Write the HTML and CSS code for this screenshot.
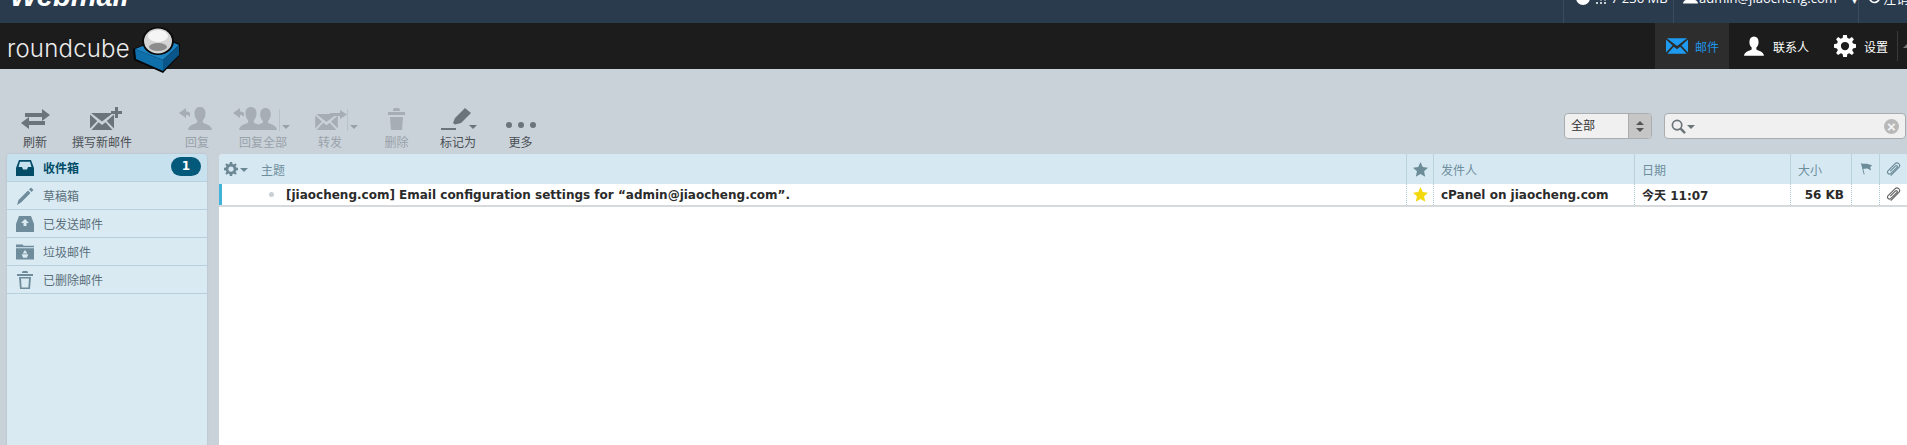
FILE: index.html
```html
<!DOCTYPE html>
<html lang="zh">
<head>
<meta charset="utf-8">
<title>Roundcube Webmail</title>
<link rel="stylesheet" href="styles.css">
</head>
<body>
<svg class="defs" width="0" height="0" aria-hidden="true">
  <symbol id="person" viewBox="0 0 24 24"><path d="M12 0c3.600 0 5.500 2.500 5.500 6.500 0 2.800-1 5.200-2.700 6.800v2.200c1 1.200 8.700 2 9.200 7.500H0c.5-5.500 8.200-6.300 9.200-7.500v-2.200C7.500 11.700 6.500 9.300 6.500 6.500 6.500 2.500 8.400 0 12 0z"/></symbol>
  <symbol id="env" viewBox="0 0 24 17"><path d="M1 0h22L12 8.500zM0 1.500v14L7.200 8zM24 1.500v14L16.800 8zM1.500 17h21l-7-7.700L12 12 8.500 9.300z"/></symbol>
  <symbol id="gear" viewBox="0 0 24 24"><path fill-rule="evenodd" d="M10 0h4l.6 3.300 2.100.9L19.500 2.300l2.200 2.200-1.900 2.800.9 2.100L24 10v4l-3.300.6-.9 2.100 1.900 2.800-2.200 2.200-2.800-1.900-2.100.9L14 24h-4l-.6-3.300-2.100-.9-2.800 1.900-2.200-2.200 1.900-2.800-.9-2.100L0 14v-4l3.300-.6.9-2.100-1.900-2.800 2.200-2.200 2.800 1.900 2.100-.9zM12 7.500a4.500 4.500 0 1 0 0 9 4.500 4.500 0 0 0 0-9z"/></symbol>
  <symbol id="clip" viewBox="0 0 16 16"><path d="M5 14.500L13.500 6c1.500-1.500 1.500-3 0-4.300S10.800.7 9.500 2L2.300 9.200c-1 1-1 2.300 0 3.100s2 .8 3-.2L11.500 6c.7-.7.7-1.300.2-1.800s-1.200-.4-1.800.2L4.500 9.800" fill="none" stroke="currentColor" stroke-width="1.300"/></symbol>
</svg>

<header class="topbar">
  <div class="brand">Webmail</div>
  <div class="topinfo">
    <div class="topcell quota">
      <svg class="t-pie" viewBox="0 0 16 16"><path fill="#fff" d="M7 2a7 7 0 1 0 7 7H7z"/><path fill="#fff" d="M9 0v7h7a7 7 0 0 0-7-7z"/></svg>
      <svg class="t-dots" viewBox="0 0 10 6" fill="#fff"><circle cx="1" cy="5" r="1"/><circle cx="5" cy="5" r="1"/><circle cx="9" cy="5" r="1"/><circle cx="5" cy="1.500" r="1"/><circle cx="9" cy="1.500" r="1"/></svg>
      <span>7 236 MB</span>
    </div>
    <div class="topcell user">
      <svg class="t-person" fill="#fff"><use href="#person"/></svg>
      <span>admin@jiaocheng.com</span><span class="chev">▾</span>
    </div>
    <div class="topcell logout">
      <svg class="t-power" viewBox="0 0 16 16"><path d="M10 2.500a6 6 0 1 0 4 5.500" fill="none" stroke="#fff" stroke-width="2"/></svg>
      <span>注销</span>
    </div>
  </div>
</header>

<nav class="appbar">
  <div class="logo">
    <span class="logotext">roundcube</span>
    <svg class="cube" viewBox="0 0 47 47">
      <path d="M0 22L30 10l17 7-1 12-16 17L1 33z" fill="#050505"/>
      <path d="M2 22l28 11 16-15-16-7z" fill="#1b83c2"/>
      <path d="M2 22l28 11v11L3 32z" fill="#0f6fab"/>
      <path d="M30 33l16-15v10L30 44z" fill="#0a558a"/>
      <ellipse cx="25" cy="14" rx="16" ry="14" fill="#0a0a0a"/>
      <ellipse cx="25" cy="14" rx="14" ry="12.500" fill="#d4d4d4"/>
      <ellipse cx="25" cy="9" rx="10" ry="6" fill="#f5f5f5"/>
      <ellipse cx="25" cy="20" rx="9" ry="4" fill="#8c8c8c"/>
    </svg>
  </div>
  <div class="tabs">
    <a class="tab tab-mail"><svg class="i-env" fill="#1e9af0"><use href="#env"/></svg><span>邮件</span></a>
    <a class="tab tab-contact"><svg class="i-person" fill="#fff"><use href="#person"/></svg><span>联系人</span></a>
    <a class="tab tab-settings"><svg class="i-gear" fill="#fff"><use href="#gear"/></svg><span>设置</span></a>
    <div class="tab-sep"><span class="caret-up"></span></div>
  </div>
</nav>

<section class="toolbar">
  <div class="buttons">
    <div class="btn b-refresh">
      <svg class="icon" viewBox="0 0 40 24" fill="#6b7479"><path d="M10 6h17V2l8 6-8 6v-4H10zM30 14v4H14v4l-8-6 8-6v4z"/></svg>
      <span>刷新</span>
    </div>
    <div class="btn b-compose">
      <svg class="icon icon-right" viewBox="0 0 40 24" fill="#6b7479"><svg x="5" y="6" width="24" height="17"><use href="#env"/></svg><path d="M30 0h3v4h4v3h-4v4h-3V7h-4V4h4z"/></svg>
      <span>撰写新邮件</span>
    </div>
    <div class="btn off b-reply">
      <svg class="icon" viewBox="0 0 40 24" fill="#a6adb4"><svg x="11" y="0" width="24" height="24"><use href="#person"/></svg><path d="M9 1L2 6l7 5V8c2 0 3 .5 4 2V6c-1-1-2-1.500-4-1.500z"/></svg>
      <span>回复</span>
    </div>
    <div class="btn off b-replyall">
      <svg class="icon icon-wide" viewBox="0 0 44 24" fill="#a6adb4"><svg x="6" y="0" width="24" height="24"><use href="#person"/></svg><svg x="21" y="1" width="23" height="23"><use href="#person"/></svg><path d="M7 1L0 6l7 5V8c2 0 3 .5 4 2V6c-1-1-2-1.500-4-1.500z"/></svg>
      <span>回复全部</span>
      <i class="split"></i><i class="drop drop-off"></i>
    </div>
    <div class="btn off b-forward">
      <svg class="icon" viewBox="0 0 40 24" fill="#a6adb4"><svg x="5" y="7" width="23" height="16"><use href="#env"/></svg><path d="M20 6h10V3l7 4.500-7 4.500V9H20z"/></svg>
      <span>转发</span>
      <i class="split"></i><i class="drop drop-off"></i>
    </div>
    <div class="btn off b-delete">
      <svg class="icon" viewBox="0 0 40 24" fill="#a6adb4"><path d="M11 5h17v3H11zM16 3l1-2h5l1 2v1h-7zM13 10h13l-1 13H14z"/></svg>
      <span>删除</span>
    </div>
    <div class="btn b-mark">
      <svg class="icon" viewBox="0 0 40 24" fill="#6b7479"><path d="M15 16l2-5L27 1l6 5-10 10-6 1.500zM3 21h15v2H3z"/></svg>
      <span>标记为</span>
      <i class="drop drop-on"></i>
    </div>
    <div class="btn b-more">
      <svg class="icon" viewBox="0 0 40 24" fill="#6b7479"><circle cx="8" cy="18" r="3"/><circle cx="20" cy="18" r="3"/><circle cx="32" cy="18" r="3"/></svg>
      <span>更多</span>
    </div>
  </div>
  <div class="filters">
    <div class="select"><span class="select-val">全部</span><span class="select-arrows"><i class="tri-up"></i><i class="tri-down"></i></span></div>
    <div class="search">
      <svg class="i-search" viewBox="0 0 16 16"><circle cx="6.500" cy="6.500" r="5" fill="none" stroke="#6b7479" stroke-width="1.800"/><path d="M10 10l5 5" stroke="#6b7479" stroke-width="2.500"/></svg>
      <i class="drop drop-search"></i>
      <span class="clear">×</span>
    </div>
  </div>
</section>

<main class="content">
  <aside class="folders">
    <div class="folder selected">
      <svg class="f-icon" viewBox="0 0 18 16" fill="#024c68"><path fill-rule="evenodd" d="M3 0h12l3 8v8H0V8zM4 1.800L2.500 7H6l1 2.500h4L12 7h3.500L14 1.800z"/></svg>
      <span>收件箱</span><b class="badge">1</b>
    </div>
    <div class="folder">
      <svg class="f-icon" viewBox="0 0 18 18" fill="#6e8c9b"><path d="M1 18l1.500-5L12 3.500l2.500 2.500L5 15.500zM13 2.500L15 .5 17.500 3l-2 2z"/></svg>
      <span>草稿箱</span>
    </div>
    <div class="folder">
      <svg class="f-icon" viewBox="0 0 18 16" fill="#6e8c9b"><path fill-rule="evenodd" d="M3 0h12l3 8v8H0V8zM9 3L5 7h2.500v3h3V7H13z"/></svg>
      <span>已发送邮件</span>
    </div>
    <div class="folder">
      <svg class="f-icon" viewBox="0 0 19 16" fill="#6e8c9b"><path fill-rule="evenodd" d="M0 0h7l1 1.500h11V3H0zM0 4h19v12H0zM9.500 6L7 9.500h5zM6 10.500L7.500 14h4l1.500-3.500z"/></svg>
      <span>垃圾邮件</span>
    </div>
    <div class="folder">
      <svg class="f-icon" viewBox="0 0 18 18" fill="#6e8c9b"><path fill-rule="evenodd" d="M1 3h16v2H1zM6 1l1-1h4l1 1v1H6zM3 6h12l-1 12H4zM5 7.500l.6 9h6.800l.6-9z"/></svg>
      <span>已删除邮件</span>
    </div>
  </aside>

  <section class="list">
    <div class="row head">
      <div class="cell subject">
        <svg class="gear-small" fill="#6c8794"><use href="#gear"/></svg><i class="drop drop-gear"></i>
        <span class="subject-title">主题</span>
      </div>
      <div class="cell star"><svg class="i-star" viewBox="0 0 16 16" fill="#6c8c99"><path d="M8 0l2.400 5.400 5.600.6-4.200 3.800 1.200 5.800L8 12.700 3 15.600l1.200-5.800L0 6l5.600-.6z"/></svg></div>
      <div class="cell">发件人</div>
      <div class="cell">日期</div>
      <div class="cell">大小</div>
      <div class="cell flag-cell"><svg class="i-flag" viewBox="0 0 14 14" fill="#6c8c99"><path d="M1 0l1 .5c3 1 5-.5 8 1l3 1-2 2 1 3.500-3-1.500c-2-1-4 0-5.500 0L5 12 4 12.500z"/></svg></div>
      <div class="cell icon-cell"><svg class="i-clip head-clip"><use href="#clip"/></svg></div>
    </div>
    <div class="row msg">
      <div class="cell subject"><i class="status"></i><span>[jiaocheng.com] Email configuration settings for “admin@jiaocheng.com”.</span></div>
      <div class="cell star"><svg class="i-star" viewBox="0 0 16 16" fill="#f2d80d"><path d="M8 0l2.400 5.400 5.600.6-4.200 3.800 1.200 5.800L8 12.700 3 15.600l1.200-5.800L0 6l5.600-.6z"/></svg></div>
      <div class="cell">cPanel on jiaocheng.com</div>
      <div class="cell">今天 11:07</div>
      <div class="cell size">56 KB</div>
      <div class="cell"></div>
      <div class="cell icon-cell"><svg class="i-clip row-clip"><use href="#clip"/></svg></div>
    </div>
  </section>
</main>
</body>
</html>
```

FILE: styles.css
```css
* { box-sizing: border-box; }
html, body { margin: 0; height: 100%; }
body {
  overflow: hidden;
  background: #c9d1d9;
  font-family: "DejaVu Sans", "Noto Sans CJK SC", sans-serif;
  font-size: 12px;
  color: #333;
}
.defs { position: absolute; }
i { display: block; font-style: normal; }

/* top bar */
.topbar {
  height: 23px;
  background: #2a3b4e;
  display: flex;
  justify-content: space-between;
  overflow: hidden;
  color: #fff;
}
.brand {
  margin: -19px 0 0 10px;
  font: italic bold 29px/30px "Liberation Sans", sans-serif;
  height: 30px;
}
.topinfo { display: flex; height: 23px; }
.topcell {
  display: flex;
  align-items: flex-start;
  border-left: 1px solid #3b4c5e;
  font: 13px/14px "Open Sans", "Noto Sans CJK SC", sans-serif;
  white-space: nowrap;
}
.topcell span { margin-top: -9px; }
.quota { width: 110px; padding-left: 12px; }
.user { width: 185px; padding-left: 9px; }
.logout { width: 49px; padding-left: 9px; }
.t-pie { width: 16px; height: 16px; margin-top: -11px; flex: none; }
.t-dots { width: 10px; height: 6px; margin: -2px 5px 0 4px; flex: none; }
.t-person { width: 15px; height: 15px; margin: -11px 1px 0 0; flex: none; }
.t-power { width: 13px; height: 13px; margin: -9px 2px 0 0; flex: none; }
.topcell .chev { margin: -7px 0 0 15px; font-size: 10px; }

/* app bar */
.appbar {
  height: 46px;
  background: #1c1c1c;
  display: flex;
  justify-content: space-between;
}
.logo { display: flex; align-items: flex-start; padding-left: 7px; }
.logotext {
  font: 300 24px/46px Inter, sans-serif;
  color: #ececec;
  letter-spacing: .2px;
  margin-top: 3px;
}
.cube { width: 47px; height: 47px; margin: 4px 0 0 3px; flex: none; }
.tabs { display: flex; align-items: stretch; }
.tab {
  display: flex;
  align-items: center;
  color: #fff;
  font-size: 12px;
  line-height: 1;
}
.tab span { padding-top: 3px; }
.tab-mail { width: 74px; background: #2d2d2d; color: #1e96ea; padding-left: 11px; gap: 7px; }
.tab-contact { width: 100px; padding-left: 15px; gap: 9px; }
.tab-settings { width: 68px; padding-left: 5px; gap: 8px; }
.i-env { width: 22px; height: 16px; }
.i-person { width: 20px; height: 21px; }
.i-gear { width: 22px; height: 22px; }
.tab-sep { width: 10px; border-left: 1px solid #3a3a3a; margin: 8px 0; position: relative; }
.caret-up {
  position: absolute; left: 5px; top: 12px;
  border: 5px solid transparent; border-bottom-color: #777; border-top: 0;
}

/* toolbar */
.toolbar {
  height: 85px;
  display: flex;
  justify-content: space-between;
  align-items: flex-start;
}
.buttons { display: flex; padding-top: 38px; }
.btn {
  position: relative;
  height: 44px;
  display: flex;
  flex-direction: column;
  align-items: center;
  font-size: 12px;
  line-height: 14px;
  color: #4a4f53;
  white-space: nowrap;
}
.btn.off { color: #9aa2a9; }
.b-refresh { width: 70px; }
.b-compose { width: 64px; }
.b-reply { width: 66px; margin-left: 30px; }
.b-replyall { width: 66px; }
.b-forward { width: 68px; }
.b-delete { width: 65px; }
.b-mark { width: 58px; }
.b-more { width: 67px; }
.icon { width: 40px; height: 24px; margin-bottom: 5px; flex: none; }
.icon-right { margin-left: 6px; }
.icon-wide { width: 44px; margin-right: 16px; }
.split { position: absolute; right: 16px; top: 2px; width: 1px; height: 22px; background: #b9c2ca; }
.drop { width: 0; height: 0; border: 4px solid transparent; border-top-color: #6b7479; border-bottom: 0; }
.btn .drop { position: absolute; right: 6px; top: 18px; }
.drop-off { border-top-color: #9aa2a9; }
.btn .drop-on { right: 10px; }

.filters { display: flex; gap: 12px; padding: 44px 1px 0 0; }
.select {
  width: 88px; height: 26px;
  display: flex;
  background: #f0f0f0;
  border: 1px solid #a9adb0;
  border-radius: 4px;
  overflow: hidden;
  color: #333;
}
.select-val { flex: 1; line-height: 24px; padding-left: 6px; font-size: 12px; }
.select-arrows {
  width: 23px;
  background: #c6c6c6;
  border-left: 1px solid #a9adb0;
  display: flex; flex-direction: column; align-items: center; justify-content: center; gap: 3px;
}
.tri-up { border: 4px solid transparent; border-bottom-color: #555; border-top: 0; }
.tri-down { border: 4px solid transparent; border-top-color: #555; border-bottom: 0; }
.search {
  width: 242px; height: 26px;
  background: #f0f0f0;
  border: 1px solid #a9adb0;
  border-radius: 4px;
  display: flex; align-items: center;
  padding: 0 6px;
}
.i-search { width: 15px; height: 15px; }
.drop-search { margin: 2px 0 0 1px; }
.clear {
  margin-left: auto;
  width: 15px; height: 15px; border-radius: 50%;
  background: #b8b8b8; color: #f4f4f4;
  font: bold 15px/15px "Liberation Sans", sans-serif; text-align: center;
}

/* content */
.content {
  display: flex;
  height: 291px;
  padding-left: 7px;
}
.folders {
  width: 200px;
  background: #d9eaf3;
  border-radius: 4px 4px 0 0;
  box-shadow: 0 0 2px #a7b5bf;
}
.folder {
  height: 28px;
  display: flex;
  align-items: center;
  border-bottom: 1px solid #b8d0dc;
  padding-left: 9px;
  color: #5b6f7a;
  position: relative;
}
.folder span { margin-left: 9px; }
.f-icon { width: 18px; height: 18px; flex: none; }
.selected { background: #c7e1ee; color: #024c68; font-weight: bold; border-radius: 4px 4px 0 0; }
.selected span { color: #024c68; }
.badge {
  position: absolute; right: 6px; top: 3px;
  width: 30px; height: 19px;
  border-radius: 10px;
  background: #03597a; color: #fff;
  text-align: center; line-height: 19px; font-size: 12px;
}

.list {
  margin-left: 12px;
  flex: 1;
  background: #fff;
  border-radius: 4px 0 0 0;
  overflow: hidden;
}
.row {
  display: grid;
  grid-template-columns: 1187px 27px 201px 156px 61px 28px 1fr;
}
.head { height: 30px; background: #d6e8f2; color: #6f8e9c; }
.msg {
  height: 23px;
  border-bottom: 2px solid #d6dadd;
  color: #2b2b2b;
  font-weight: bold;
  font-size: 12px;
}
.cell { display: flex; align-items: center; padding-left: 7px; white-space: nowrap; }
.head .cell + .cell { border-left: 1px solid #b9d2dd; }
.msg .cell + .cell { border-left: 1px dotted #a9c7d2; }
.msg .subject { padding-left: 0; border-left: 3px solid #3fb4d8; }
.subject span { display: block; }
.head .subject { padding-left: 5px; }
.gear-small { width: 14px; height: 14px; }
.drop-gear { margin: 2px 0 0 2px; border-top-color: #6c8794; }
.subject-title { margin-left: 13px; }
.status { width: 5px; height: 5px; border-radius: 50%; background: #c9cfd4; margin: 0 12px 0 47px; }
.star { padding-left: 6px; }
.i-star { width: 15px; height: 15px; }
.size { justify-content: flex-end; padding: 0 7px 0 0; }
.flag-cell { padding-left: 8px; }
.icon-cell { padding-left: 6px; }
.i-flag { width: 13px; height: 13px; }
.i-clip { width: 15px; height: 15px; }
.head-clip { color: #6c8c99; }
.row-clip { color: #666; }
```
